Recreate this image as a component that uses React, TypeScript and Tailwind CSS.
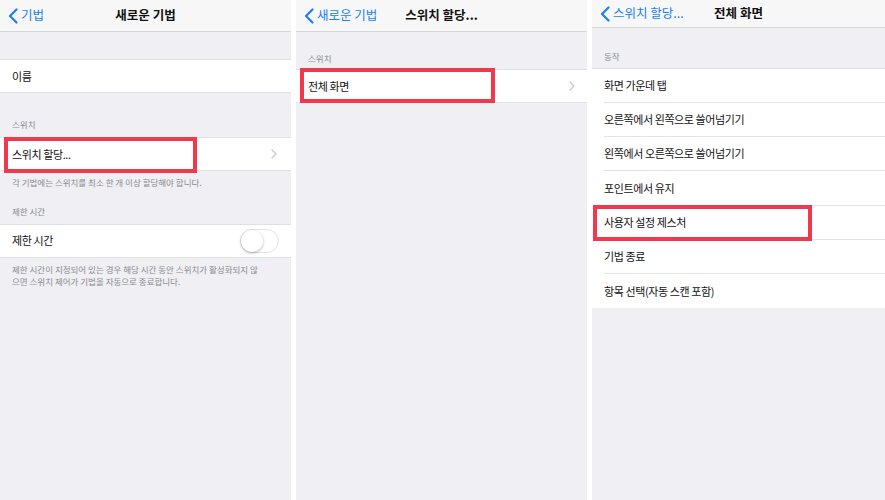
import React from "react";

const font = { fontFamily: '"Noto Sans CJK KR", "Noto Sans", sans-serif' };

function BackChevron() {
  return (
    <svg width="10" height="16" viewBox="0 0 10 16" className="shrink-0">
      <path d="M8.5 1.5 L2 8 L8.5 14.5" fill="none" stroke="#1a7ef5" strokeWidth="2.2" strokeLinecap="round" strokeLinejoin="round" />
    </svg>
  );
}

function Chevron() {
  return (
    <svg width="6" height="10" viewBox="0 0 6 10">
      <path d="M1 1 L5 5 L1 9" fill="none" stroke="#c7c7cc" strokeWidth="1.2" strokeLinecap="round" strokeLinejoin="round" />
    </svg>
  );
}

function NavBar({ back, title, h = "h-[32px]" }: { back: string; title: string; h?: string }) {
  return (
    <div className={`relative ${h} bg-[#f7f7f7] border-b border-[#d6d6da] flex items-center justify-center`}>
      <div className="absolute left-[8px] top-0 h-full flex items-center gap-[3px] text-[#1a7ef5] text-[12.5px]">
        <BackChevron />
        <span>{back}</span>
      </div>
      <span className="text-[12.5px] font-semibold text-[#111]">{title}</span>
    </div>
  );
}

function Header({ children, pt = "pt-[20px]", pb = "pb-[6px]" }: { children: React.ReactNode; pt?: string; pb?: string }) {
  return <div className={`px-[12px] ${pt} ${pb} text-[8.5px] text-[#8a8a8f]`}>{children}</div>;
}

function Footer({ children }: { children: React.ReactNode }) {
  return <div className="px-[12px] pt-[5px] text-[8.5px] leading-[12px] text-[#8a8a8f]">{children}</div>;
}

function RedBox({ className }: { className: string }) {
  return <div className={`absolute border-[4px] border-[#f2384c] pointer-events-none ${className}`} />;
}

function Toggle() {
  return (
    <div className="w-[39px] h-[24px] rounded-full border border-[#e3e3e6] bg-white relative">
      <div className="absolute left-0 top-0 w-[22px] h-[22px] rounded-full bg-white shadow-[0_1px_3px_rgba(0,0,0,0.3)]" />
    </div>
  );
}

const rowText = "text-[11px] tracking-[-0.4px] text-[#111]";

function PanelOne() {
  return (
    <div className="w-[291px] h-full bg-[#efeff4] flex flex-col">
      <NavBar back="기법" title="새로운 기법" />
      <div className="h-[27px]" />
      <div className={`h-[34px] bg-white border-y border-[#e0e0e4] flex items-center px-[12px] ${rowText}`}>이름</div>
      <Header pt="pt-[25px]">스위치</Header>
      <div className={`relative h-[34px] bg-white border-y border-[#e0e0e4] flex items-center justify-between pl-[12px] pr-[14px] ${rowText}`}>
        <span>스위치 할당...</span>
        <Chevron />
        <RedBox className="left-[4px] right-[94px] -top-[1px] -bottom-[3px]" />
      </div>
      <Footer>각 기법에는 스위치를 최소 한 개 이상 할당해야 합니다.</Footer>
      <Header pt="pt-[17px]">제한 시간</Header>
      <div className={`h-[34px] bg-white border-y border-[#e0e0e4] flex items-center justify-between pl-[12px] pr-[12px] ${rowText}`}>
        <span>제한 시간</span>
        <Toggle />
      </div>
      <Footer>
        제한 시간이 지정되어 있는 경우 해당 시간 동안 스위치가 활성화되지 않
        <br />
        으면 스위치 제어가 기법을 자동으로 종료합니다.
      </Footer>
    </div>
  );
}

function PanelTwo() {
  return (
    <div className="w-[291px] h-full bg-[#efeff4] flex flex-col">
      <NavBar back="새로운 기법" title="스위치 할당..." />
      <Header pt="pt-[20px]" pb="pb-[4px]">스위치</Header>
      <div className={`relative h-[34px] bg-white border-y border-[#e0e0e4] flex items-center justify-between pl-[12px] pr-[12px] ${rowText}`}>
        <span>전체 화면</span>
        <Chevron />
        <RedBox className="left-[4px] right-[92px] -top-[2px] -bottom-[1px]" />
      </div>
    </div>
  );
}

const actions = [
  "화면 가운데 탭",
  "오른쪽에서 왼쪽으로 쓸어넘기기",
  "왼쪽에서 오른쪽으로 쓸어넘기기",
  "포인트에서 유지",
  "사용자 설정 제스처",
  "기법 종료",
  "항목 선택(자동 스캔 포함)",
];

function PanelThree() {
  return (
    <div className="w-[293px] h-full bg-[#efeff4] flex flex-col">
      <NavBar back="스위치 할당..." title="전체 화면" h="h-[28px]" />
      <Header pt="pt-[22px]" pb="pb-[5px]">동작</Header>
      <div className="bg-white border-t border-[#e0e0e4]">
        {actions.map((a, i) => (
          <div key={a} className="relative h-[34.2px] pl-[12px]">
            <div className={`h-full flex items-center ${rowText} ${i < actions.length - 1 ? "border-b border-[#e3e3e6]" : ""}`}>
              {a}
            </div>
            {a === "사용자 설정 제스처" && <RedBox className="left-[1px] w-[219px] -top-[1px] -bottom-[1px]" />}
          </div>
        ))}
      </div>
    </div>
  );
}

export default function App() {
  return (
    <div className="w-[885px] h-[500px] bg-white flex gap-[5px] overflow-hidden" style={font}>
      <PanelOne />
      <PanelTwo />
      <PanelThree />
    </div>
  );
}
